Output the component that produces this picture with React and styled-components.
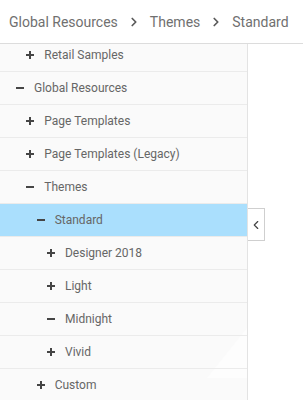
import React from 'react';
import styled, { createGlobalStyle } from 'styled-components';
import { ChevronRight, ChevronLeft } from 'lucide-react';

const GlobalStyle = createGlobalStyle`
  html, body {
    margin: 0;
    padding: 0;
    background: #ffffff;
    font-family: Roboto, "Liberation Sans", sans-serif;
  }
`;

const Page = styled.div`
  width: 303px;
  height: 400px;
  display: flex;
  flex-direction: column;
  overflow: hidden;
`;

const Breadcrumb = styled.div`
  height: 43px;
  flex-shrink: 0;
  display: flex;
  align-items: center;
  gap: 9px;
  padding-left: 9px;
  border-bottom: 1px solid #dcdcdc;
  font-size: 14px;
  color: #707070;
  white-space: nowrap;
`;

const Crumb = styled.span`
  line-height: 1;
`;

const Sep = styled.span`
  display: flex;
  align-items: center;
  color: #5a5a5a;
`;

const Main = styled.div`
  flex: 1;
  display: flex;
  min-height: 0;
`;

const TreePanel = styled.div`
  position: relative;
  width: 247px;
  flex-shrink: 0;
  background: #fafafa;
  border-right: 1px solid #e3e3e3;
  overflow: hidden;
`;

const Watermark = styled.svg`
  position: absolute;
  right: 0;
  top: 284px;
  width: 40px;
  height: 50px;
`;

const TreeList = styled.ul`
  position: relative;
  list-style: none;
  margin: -5px 0 0;
  padding: 0;
`;

const Row = styled.li`
  height: 32px;
  display: flex;
  align-items: center;
  gap: 9px;
  padding-left: ${p => 15 + p.level * 10.33}px;
  border-bottom: 1px solid #ebebeb;
  background: ${p => (p.selected ? '#aadffd' : 'transparent')};
  font-size: 12px;
  color: #666666;
`;

const Toggle = styled.svg`
  width: 10px;
  height: 10px;
  flex-shrink: 0;
`;

const Side = styled.div`
  padding-top: 164px;
`;

const CollapseButton = styled.button`
  width: 17px;
  height: 33px;
  margin: 0;
  padding: 0;
  display: flex;
  align-items: center;
  justify-content: center;
  background: #ffffff;
  border: 1px solid #cfcfcf;
  border-left: none;
  color: #444444;
`;

const items = [
  { label: 'Retail Samples', level: 1, open: false },
  { label: 'Global Resources', level: 0, open: true },
  { label: 'Page Templates', level: 1, open: false },
  { label: 'Page Templates (Legacy)', level: 1, open: false },
  { label: 'Themes', level: 1, open: true },
  { label: 'Standard', level: 2, open: true, selected: true },
  { label: 'Designer 2018', level: 3, open: false },
  { label: 'Light', level: 3, open: false },
  { label: 'Midnight', level: 3, open: true },
  { label: 'Vivid', level: 3, open: false },
  { label: 'Custom', level: 2, open: false },
];

const ToggleIcon = ({ open }) => (
  <Toggle viewBox="0 0 10 10">
    <rect x="1" y="4" width="8" height="2" fill="#454545" />
    {!open && <rect x="4" y="1" width="2" height="8" fill="#454545" />}
  </Toggle>
);

export default function App() {
  return (
    <Page>
      <GlobalStyle />
      <Breadcrumb>
        <Crumb>Global Resources</Crumb>
        <Sep><ChevronRight size={14} strokeWidth={3} /></Sep>
        <Crumb>Themes</Crumb>
        <Sep><ChevronRight size={14} strokeWidth={3} /></Sep>
        <Crumb>Standard</Crumb>
      </Breadcrumb>
      <Main>
        <TreePanel>
          <Watermark viewBox="0 0 40 50">
            <polygon points="40,0 40,50 0,50" fill="#fdfdfd" />
          </Watermark>
          <TreeList>
            {items.map(item => (
              <Row key={item.label} level={item.level} selected={item.selected}>
                <ToggleIcon open={item.open} />
                {item.label}
              </Row>
            ))}
          </TreeList>
        </TreePanel>
        <Side>
          <CollapseButton>
            <ChevronLeft size={14} strokeWidth={2} />
          </CollapseButton>
        </Side>
      </Main>
    </Page>
  );
}
